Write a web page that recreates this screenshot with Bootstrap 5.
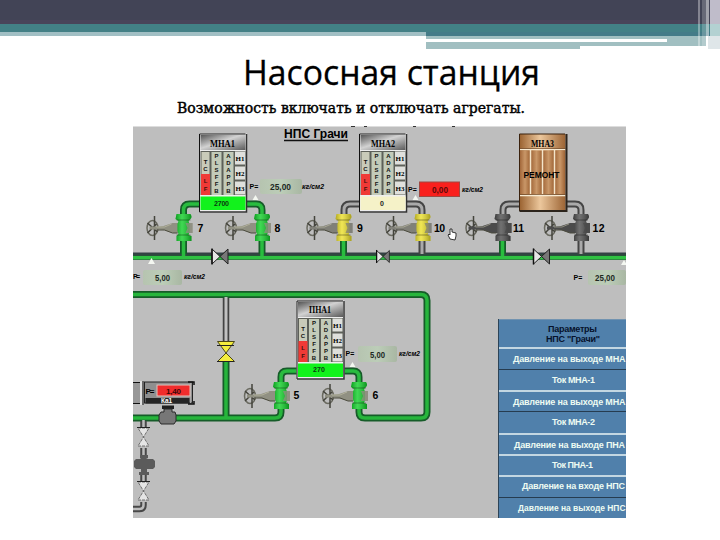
<!DOCTYPE html>
<html lang="ru">
<head>
<meta charset="utf-8">
<meta name="viewport" content="width=device-width, initial-scale=1">
<title>Насосная станция</title>
<link href="https://cdn.jsdelivr.net/npm/bootstrap@5.3.0/dist/css/bootstrap.min.css" rel="stylesheet">
<style>
body{width:720px;height:540px;background:#fff;color:#000}
.slide-top{width:720px;height:50px}
.slide-title{font:400 35.5px/44px "Open Sans",sans-serif;height:44px;padding-left:243px}
.slide-note{font:400 14.5px/20px "DejaVu Serif",serif;height:32px;padding:4px 0 0 177px}
.slide-title svg,.slide-note svg{display:block;overflow:visible}
.scheme{width:493px;height:392px;margin-left:133px;background:#bebebe}
.scheme>*{grid-area:1/1}
.params{width:128px;height:199px;border-left:1px solid #2d4457;background:#5080ab;font:700 9px/11px "Liberation Sans",sans-serif}
.params .list-group-item{height:22px;padding:0;border:0;border-top:1px solid #263c50;background:#5080ab;color:#edfbf2;white-space:nowrap;overflow:hidden;line-height:20px}
.params .list-group-item.lit{border-top:2px solid #c3d7e2}
.params .list-group-item.head{height:29px;border-top:1px solid #7193b0;color:#06122b;line-height:10px;padding-top:3px}
.params svg{display:block;width:127px;height:100%;overflow:hidden}
.ui{font-family:"Liberation Sans",sans-serif}
.sf{font-family:"Liberation Serif",serif;font-weight:700}
</style>
</head>
<body class="overflow-hidden">
<header class="slide-top">
<svg class="d-block" width="720" height="50" shape-rendering="crispEdges">
<rect width="720" height="24" fill="#424456"/><rect y="20" width="700" height="4" fill="#49445a"/>
<rect y="24" width="720" height="8" fill="#438086"/><rect y="32" width="426" height="4" fill="#a1bfc4"/>
<rect x="426" y="32" width="294" height="4" fill="#447b88"/>
<rect x="426" y="36" width="280" height="10" fill="#a1bfc1"/><rect x="426" y="39" width="241" height="3" fill="#fff"/>
<rect x="426" y="45" width="154" height="4" fill="#a1bfc1"/>
<rect x="698" width="2" height="46" fill="#fff" opacity=".35"/><rect x="702" width="4" height="46" fill="#fff" opacity=".2"/>
<rect x="706" width="3" height="49" fill="#fff" opacity=".5"/>
<rect x="710" width="10" height="24" fill="#bfbcca"/><rect x="710" y="24" width="10" height="12" fill="#b3d1d2"/><rect x="708" y="36" width="12" height="13" fill="#dfe6e9"/>
</svg>
</header>
<main>
<h1 class="slide-title m-0"><svg width="300" height="44"><text x="0" y="35" stroke="#000" stroke-width=".3" textLength="297" lengthAdjust="spacingAndGlyphs">Насосная станция</text></svg></h1>
<p class="slide-note m-0"><svg width="350" height="20"><text x="0" y="14.5" stroke="#000" stroke-width=".45" textLength="348" lengthAdjust="spacingAndGlyphs">Возможность включать и отключать агрегаты.</text></svg></p>
<section class="scheme d-grid overflow-hidden">
<svg class="ui" width="493" height="392" viewBox="133 126 493 392">
<defs>
<linearGradient id="silver" x1="0" x2="1" y1="0" y2="1"><stop offset="0" stop-color="#555"/><stop offset=".45" stop-color="#d2d2d2"/><stop offset="1" stop-color="#5a5a5a"/></linearGradient>
<linearGradient id="wood" x1="0" x2="1"><stop offset="0" stop-color="#9a6230"/><stop offset=".45" stop-color="#ecc79c"/><stop offset="1" stop-color="#9c6434"/></linearGradient>
<linearGradient id="slat" x1="0" x2="1"><stop offset="0" stop-color="#a3683a"/><stop offset=".5" stop-color="#c99768"/><stop offset="1" stop-color="#a06536"/></linearGradient>
<linearGradient id="read"><stop offset="0" stop-color="#b6c4b0"/><stop offset=".5" stop-color="#bccdb8"/><stop offset="1" stop-color="#a9b7a3"/></linearGradient>
<linearGradient id="bodyg"><stop offset="0" stop-color="#000" stop-opacity=".25"/><stop offset=".4" stop-color="#fff" stop-opacity=".2"/><stop offset="1" stop-color="#000" stop-opacity=".3"/></linearGradient>
<symbol id="unit" overflow="visible">
<rect x="-.5" y="-.5" width="48" height="79" fill="#eee"/><path d="M0 78V0H46" stroke="#111" fill="none"/><path d="M47 0V78H0" stroke="#333" stroke-width="1.5" fill="none"/>
<rect x="1" y="1" width="45" height="15" fill="url(#silver)"/><rect x="1" y="17" width="45" height="44" fill="#5d6059"/>
<rect x="2" y="18" width="8" height="22" fill="#c9cbb9"/><rect x="1.5" y="40" width="9" height="21" fill="#f03a36"/>
<rect x="12" y="18" width="10" height="43" fill="#c3cbb9"/><rect x="24" y="18" width="10" height="43" fill="#c3cbb9"/>
<path d="M35.500 17.500h10v13h-10zM35.500 32.500h10v13h-10zM35.500 47.500h10v13h-10z" fill="#dfe0dc"/>
<g font-size="6" font-weight="700" text-anchor="middle" fill="#111"><text x="6" y="30">Т</text><text x="6" y="37">С</text><text x="6" y="49" fill="#40100c">L</text><text x="6" y="56.500" fill="#40100c">F</text>
<text x="17" y="23.500">Р</text><text x="17" y="30.500">L</text><text x="17" y="37.500">S</text><text x="17" y="44.500">F</text><text x="17" y="51.500">F</text><text x="17" y="58.500">В</text>
<text x="29" y="23.500">А</text><text x="29" y="30.500">D</text><text x="29" y="37.500">А</text><text x="29" y="44.500">Р</text><text x="29" y="51.500">Р</text><text x="29" y="58.500">В</text></g>
<g class="sf" font-size="7" text-anchor="middle"><text x="40.500" y="26.500">Н1</text><text x="40.500" y="41.500">Н2</text><text x="40.500" y="56.500">Н3</text></g>
<rect x="1" y="62.500" width="45" height="13.500" fill="currentColor"/>
</symbol>
<symbol id="valve" overflow="visible">
<g fill="none" stroke="#44443c" stroke-width="2"><ellipse cx="-31" cy="0" rx="5.500" ry="7.500" stroke="#6a6a60" stroke-width="1.500"/><path d="M-29-12V12M-36-5l10 9M-36 5l9-9" stroke-width="1.500"/></g>
<path d="M-34-1.500h7l7-.5 9-3h20v10h-20l-9-3-7-.5h-7z" style="fill:var(--stem)"/><path d="M-27 2h8l8 3h5" stroke="#4b4b3e" fill="none"/><path d="M-27-1h8l7-3" stroke="#d2cfb4" opacity=".5" fill="none"/>
<path d="M-7-14H7q2 3 0 5l-2 2 1 3v8l-1 3 3 1v5H-7V8l2-2-1-3v-7l1-3-3-2z" fill="currentColor"/><path d="M-7-14H7q2 3 0 5l-2 2 1 3v8l-1 3 3 1v5H-7V8l2-2-1-3v-7l1-3-3-2z" fill="url(#bodyg)"/><path d="M-7-8H7M-7 7H7" stroke="#000" opacity=".35"/>
<path d="M2-5h7v10H2l2-5z" style="fill:var(--stem)" opacity=".75"/>
</symbol>
<symbol id="check" overflow="visible"><path d="M-8-7.500L0 0l-8 7.500z" fill="#e6e6e6" stroke="#222"/><path d="M8-7.500L0 0l8 7.500z" fill="#777" stroke="#222"/><path d="M-8-8V8" stroke="#111" stroke-width="1.500"/></symbol>
</defs>
<rect x="133" y="126" width="493" height="392" fill="#bebebe"/>
<path d="M133 126.500h493" stroke="#ddd"/><g fill="#333"><rect x="351" y="126" width="4" height="1"/><rect x="364" y="126" width="3" height="1"/><rect x="413" y="126" width="3" height="1"/><rect x="452" y="126" width="3" height="1"/></g>
<!-- main pipelines -->
<g fill="none"><path d="M133 256.500H626" stroke="#29513a" stroke-width="7"/><path d="M133 253.500H626" stroke="#344044" stroke-width="2"/><path d="M133 257.700H626" stroke="#2fc142" stroke-width="3.500"/>
<g stroke="#165c29" stroke-width="7"><path d="M133 294.500H421q6 0 6 6V412q0 6-6 6H365q-6 0-6-6v-8M133 418H275q6 0 6-6v-8M226 360v56"/></g>
<g stroke="#27b53c" stroke-width="3.500"><path d="M133 294.500H421q6 0 6 6V412q0 6-6 6H365q-6 0-6-6v-8M133 418H275q6 0 6-6v-8M226 360v58"/></g>
<path d="M226 298v49" stroke="#424242" stroke-width="6.500"/><path d="M226 297v50" stroke="#c0c0c0" stroke-width="3"/>
<g stroke="#165c29" stroke-width="7"><path d="M200 204h-10.500q-6 0-6 6v44M247 204h9q6 0 6 6v44M343.500 238v16M297 371h-10q-6 0-6 6v30M344 371h9q6 0 6 6v30M502.500 238v16"/></g>
<g stroke="#29bc3f" stroke-width="3.500"><path d="M200 204h-10.500q-6 0-6 6v46M247 204h9q6 0 6 6v46M343.500 238v18M297 371h-10q-6 0-6 6v30M344 371h9q6 0 6 6v30M502.500 238v18"/></g>
<g stroke="#454545" stroke-width="7"><path d="M360 204h-10q-6 0-6 6v8M406 204h10q6 0 6 6v44M520 204h-11q-6 0-6 6v8M566 204h9q6 0 6 6v44"/></g>
<g stroke="#aaa" stroke-width="3"><path d="M360 204h-10q-6 0-6 6v8M406 204h10q6 0 6 6v44M520 204h-11q-6 0-6 6v8M566 204h9q6 0 6 6v44"/></g></g>
<!-- pump units -->
<use href="#unit" x="199.500" y="134" color="#12f21c"/><use href="#unit" x="359.500" y="134" color="#f5f2c8"/><use href="#unit" x="297" y="301" color="#12f21c"/>
<g class="sf" font-size="10"><text x="210" y="146.500" textLength="25" lengthAdjust="spacingAndGlyphs">МНА1</text><text x="371" y="146.500" textLength="24" lengthAdjust="spacingAndGlyphs">МНА2</text><text x="309" y="313" textLength="22" lengthAdjust="spacingAndGlyphs">ПНА1</text></g>
<g font-size="7" font-weight="700" font-family="Liberation Sans"><text x="214" y="206" fill="#093c10" textLength="15">2700</text><text x="380" y="206" fill="#222">0</text><text x="313" y="372" fill="#093c10" textLength="12">270</text></g>
<g><rect x="519.500" y="134" width="46" height="76" fill="url(#wood)"/><path d="M519.500 149.500h46M519.500 195.500h46" stroke="#f7ead2" stroke-width="1.500"/><path d="M519.500 148.500h46M519.500 194.500h46" stroke="#5d3513" opacity=".6"/>
<g fill="url(#slat)"><rect x="520" y="150.500" width="10" height="43.500"/><rect x="531" y="150.500" width="11" height="43.500"/><rect x="543" y="150.500" width="11" height="43.500"/><rect x="555" y="150.500" width="10" height="43.500"/></g><path d="M530.500 149v45M542.500 149v45M554.500 149v45" stroke="#f4e5cb" stroke-width="1.500"/><path d="M519.500 211V134H565" fill="none" stroke="#3a220e"/><path d="M566.500 134v77h-47" fill="none" stroke="#2c241c" stroke-width="2"/></g>
<g font-weight="700"><text x="531" y="146.500" font-size="9.500" class="sf" textLength="23" lengthAdjust="spacingAndGlyphs">МНА3</text><text x="523.500" y="178" font-size="9" textLength="36" lengthAdjust="spacingAndGlyphs">РЕМОНТ</text></g>
<!-- gate valves -->
<g style="--stem:#909082" color="#10cf28"><use href="#valve" x="183.500" y="228"/><use href="#valve" x="262" y="228"/><use href="#valve" x="281" y="396"/><use href="#valve" x="359" y="396"/></g>
<g style="--stem:#808078" color="#ece02b"><use href="#valve" x="343.500" y="228"/><use href="#valve" x="422.500" y="228"/></g>
<g style="--stem:#4b4b4b" color="#4d4d4d"><use href="#valve" x="502.500" y="228"/><use href="#valve" x="581" y="228"/></g>
<use href="#check" x="220" y="256.500"/><use href="#check" x="383" y="256.500" transform="translate(76.600 51.300) scale(.8)"/><use href="#check" x="541.500" y="256.500"/>
<path d="M217.500 342h17L226 353.500zM217.500 362h17L226 353.500z" transform="translate(0 -.5)" fill="#f4ed3d" stroke="#4b4716"/><path d="M217 345.500h17M217 361.500h17" stroke="#222"/>
<g font-size="10.500" font-weight="700"><text x="197.500" y="232">7</text><text x="274.500" y="232">8</text><text x="357" y="232">9</text><text x="434" y="232" textLength="11">10</text><text x="513" y="232" textLength="11">11</text><text x="592.500" y="232" textLength="12">12</text><text x="293.500" y="399">5</text><text x="372.500" y="399">6</text></g>
<text x="284" y="138" font-size="12" font-weight="700" textLength="64" lengthAdjust="spacingAndGlyphs">НПС Грачи</text><path d="M284 140.500h64" stroke="#111" stroke-width="1.300"/>
<!-- pressure readings -->
<g fill="url(#read)"><rect x="260" y="179" width="42" height="15" rx="2"/><rect x="143" y="270" width="39" height="15" rx="2"/><rect x="588" y="270" width="38" height="15" rx="2"/><rect x="358" y="346" width="39" height="16" rx="2"/></g>
<rect x="419.500" y="182" width="40" height="14.500" fill="#f9201d" stroke="#a04842"/>
<g font-size="9" font-weight="700" fill="#20281f"><text x="270" y="189.500" textLength="21" lengthAdjust="spacingAndGlyphs">25,00</text><text x="155" y="280.500" textLength="15" lengthAdjust="spacingAndGlyphs">5,00</text><text x="595" y="280.500" textLength="20" lengthAdjust="spacingAndGlyphs">25,00</text><text x="370" y="357.500" textLength="15" lengthAdjust="spacingAndGlyphs">5,00</text><text x="432" y="193" fill="#5b0909" textLength="16" lengthAdjust="spacingAndGlyphs">0,00</text></g>
<g font-size="7" font-weight="700"><text x="249.500" y="189">P=</text><text x="408" y="192">P=</text><text x="133" y="279" textLength="7">P=</text><text x="573.500" y="279.500">P=</text><text x="345.500" y="356">P=</text></g>
<g font-size="7" font-weight="700" font-style="italic"><text x="302" y="189" textLength="22" lengthAdjust="spacingAndGlyphs">кг/см2</text><text x="462" y="192" textLength="21" lengthAdjust="spacingAndGlyphs">кг/см2</text><text x="184" y="279" textLength="21" lengthAdjust="spacingAndGlyphs">кг/см2</text><text x="399" y="356" textLength="21" lengthAdjust="spacingAndGlyphs">кг/см2</text></g>
<path d="M252.500 200l3-5 3 5zM412.500 200l3-5 3 5zM148 264l3.500-6 3.500 6zM349.500 367l3-5 3 5zM621 265l3-5 3 5z" fill="#f4f7f1"/>
<!-- hand pointer -->
<path d="M450 239l-2-4 1-1 1 1v-6h2v3l4 1v3l-1 4z" fill="#fff" stroke="#222" stroke-width=".9"/>
<!-- inlet sensor and drain branch -->
<rect x="133" y="382" width="7" height="22" fill="#989898"/><path d="M133 382.500h7M133 403.500h7" stroke="#111"/><path d="M141 381v24" stroke="#fff"/><path d="M143 381v24" stroke="#111"/>
<rect x="144.500" y="382" width="48" height="21" fill="#8f8f8f" stroke="#222"/><rect x="145.500" y="398" width="44" height="5.500" fill="#252525"/><path d="M190.500 383v20" stroke="#aaa"/><path d="M188 382h6v3M188 404h6v-3" fill="none" stroke="#111" stroke-width="1.500"/>
<rect x="157" y="385" width="33" height="11" fill="#f02c2c" stroke="#dec4be"/><text x="166" y="393.500" font-size="8" font-weight="700" fill="#3b0707" textLength="15">1,40</text><text x="145.500" y="394" font-size="8" font-weight="700" textLength="9">P=</text><text x="161" y="403" font-size="6.500" font-weight="700" fill="#fff" textLength="11">Ка1</text>
<rect x="162" y="405.500" width="12" height="3.500" fill="#1f1f1f"/><path d="M164 409h8v3h3l1 3v6l-2 3h-13l-2-3v-6l2-3h3z" fill="#777" stroke="#2b2b2b"/>
<g fill="none"><path d="M143.500 421v7M143.500 448v8M143.500 474v8M143.500 502v3q0 4-4 4H133" stroke="#484848" stroke-width="6.500"/><path d="M143.500 420v8M143.500 448v8M143.500 474v8M143.500 502v3q0 4-4 4H133" stroke="#bdbdbd" stroke-width="2.500"/></g>
<path d="M138 428h11l-5.500 9zM138 446h11l-5.500-9zM138 482h11l-5.500 9zM138 500h11l-5.500-9z" fill="#e5e5e5" stroke="#555" stroke-width=".8" stroke-dasharray="3 1"/><path d="M137 427.500h13M137 481.500h13" stroke="#222"/>
<path d="M140 455h8v3l-2 1h7l2 2v6l-2 2h-6v3h2v3h-10v-3h2v-3h-5l-2-2v-6l2-2h5l-1-1z" fill="#5b5b5b"/>
</svg>
<div class="params list-group list-group-flush rounded-0 align-self-end ms-auto">
<div class="list-group-item head"><svg class="ui"><text x="49" y="9" fill="currentColor" textLength="49">Параметры</text><text x="47" y="18.500" fill="currentColor" textLength="54">НПС "Грачи"</text></svg></div>
<div class="list-group-item lit"><svg><text x="14" y="12.500" fill="currentColor" textLength="112.500">Давление на выходе МНА</text></svg></div>
<div class="list-group-item"><svg><text x="53" y="13" fill="currentColor" textLength="43">Ток МНА-1</text></svg></div>
<div class="list-group-item lit"><svg><text x="14" y="12.500" fill="currentColor" textLength="112.500">Давление на выходе МНА</text></svg></div>
<div class="list-group-item"><svg><text x="53" y="13" fill="currentColor" textLength="43">Ток МНА-2</text></svg></div>
<div class="list-group-item lit"><svg><text x="15" y="12.500" fill="currentColor" textLength="111">Давление на выходе ПНА</text></svg></div>
<div class="list-group-item lit"><svg><text x="53" y="11.500" fill="currentColor" textLength="41">Ток ПНА-1</text></svg></div>
<div class="list-group-item lit"><svg><text x="23" y="12" fill="currentColor" textLength="103">Давление на входе НПС</text></svg></div>
<div class="list-group-item"><svg><text x="19" y="13" fill="currentColor" textLength="107.500" lengthAdjust="spacingAndGlyphs">Давление на выходе НПС</text></svg></div>
</div>
</section>
</main>
<script src="https://cdn.jsdelivr.net/npm/bootstrap@5.3.0/dist/js/bootstrap.bundle.min.js"></script>
</body>
</html>
